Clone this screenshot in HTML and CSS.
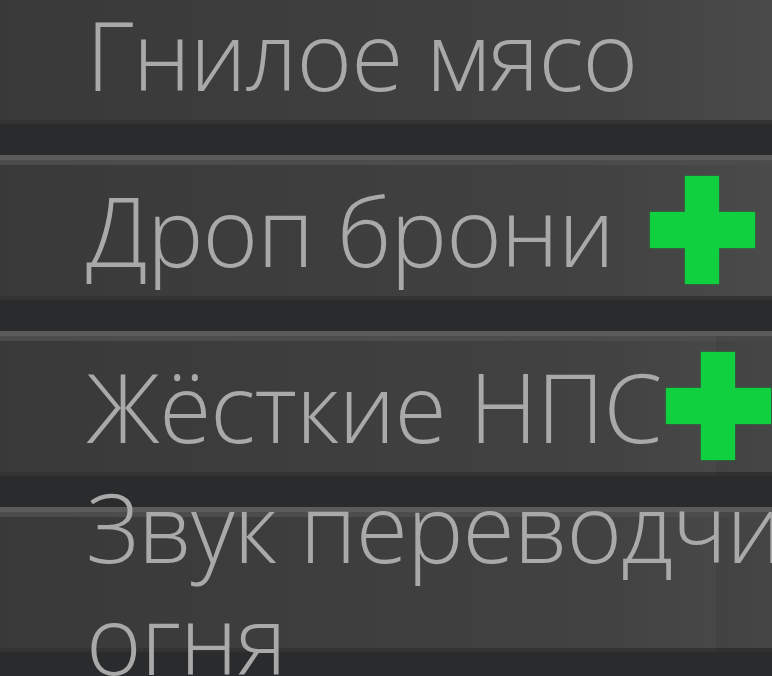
FILE: index.html
```html
<!DOCTYPE html>
<html lang="ru">
<head>
    <meta charset="UTF-8">
    <meta name="viewport" content="width=device-width, initial-scale=1.0">
    <title>Настройки</title>
    <link rel="stylesheet" href="styles.css">
</head>
<body>
    <div class="options">
        <div class="option">
            <span class="label">Гнилое мясо</span>
        </div>

        <div class="option">
            <span class="label">Дроп брони</span>
            <svg class="plus plus-wide" viewBox="0 0 105 108" width="105" height="108">
                <path d="M35 0h34v36h36v36H69v36H35V72H0V36h35z"/>
            </svg>
        </div>

        <div class="option option-split">
            <span class="label">Жёсткие НПС</span>
            <svg class="plus" viewBox="0 0 105 108" width="105" height="108">
                <path d="M35 0h34v36h36v36H69v36H35V72H0V36h35z"/>
            </svg>
        </div>

        <div class="option option-split">
            <span class="label">Звук переводчика<br>огня</span>
        </div>
    </div>
</body>
</html>
```

FILE: styles.css
```css
:root {
    --row-dark: #393939;
    --row-light: #4a4a4a;
    --gap-color: #2a2b2c;
    --text-color: #a9a9a9;
    --plus-color: #10d040;
}

* {
    box-sizing: border-box;
    margin: 0;
    padding: 0;
}

body {
    background: var(--gap-color);
    font-family: 'Open Sans', 'DejaVu Sans Condensed', sans-serif;
    overflow: hidden;
    height: 676px;
}

.options {
    display: flex;
    flex-direction: column;
    gap: 31px;
    width: 1100px;
    margin-top: -21px;
}

.option {
    position: relative;
    height: 145px;
    display: flex;
    align-items: center;
    padding-left: 86px;
    background: linear-gradient(90deg, var(--row-dark) 0%, #424242 55%, var(--row-light) 70%);
    border-top: 5px solid #5a5a5a;
    box-shadow: inset 0 5px 0 #4c4c4c, inset 0 -4px 0 #333;
}

/* правая часть строки чуть темнее */
.option-split::after {
    content: '';
    position: absolute;
    top: 0;
    bottom: 0;
    left: 716px;
    right: 0;
    background: rgba(0, 0, 0, 0.06);
}

.label {
    color: var(--text-color);
    font-size: 95px;
    font-weight: 300;
    letter-spacing: -1px;
    line-height: 112px;
    white-space: nowrap;
    position: relative;
    z-index: 1;
}

.plus {
    fill: var(--plus-color);
    margin-left: 5px;
    flex-shrink: 0;
    position: relative;
    z-index: 1;
    filter: drop-shadow(0 0 1px rgba(16, 160, 50, 0.8));
}

.plus-wide {
    margin-left: 36px;
}
```
